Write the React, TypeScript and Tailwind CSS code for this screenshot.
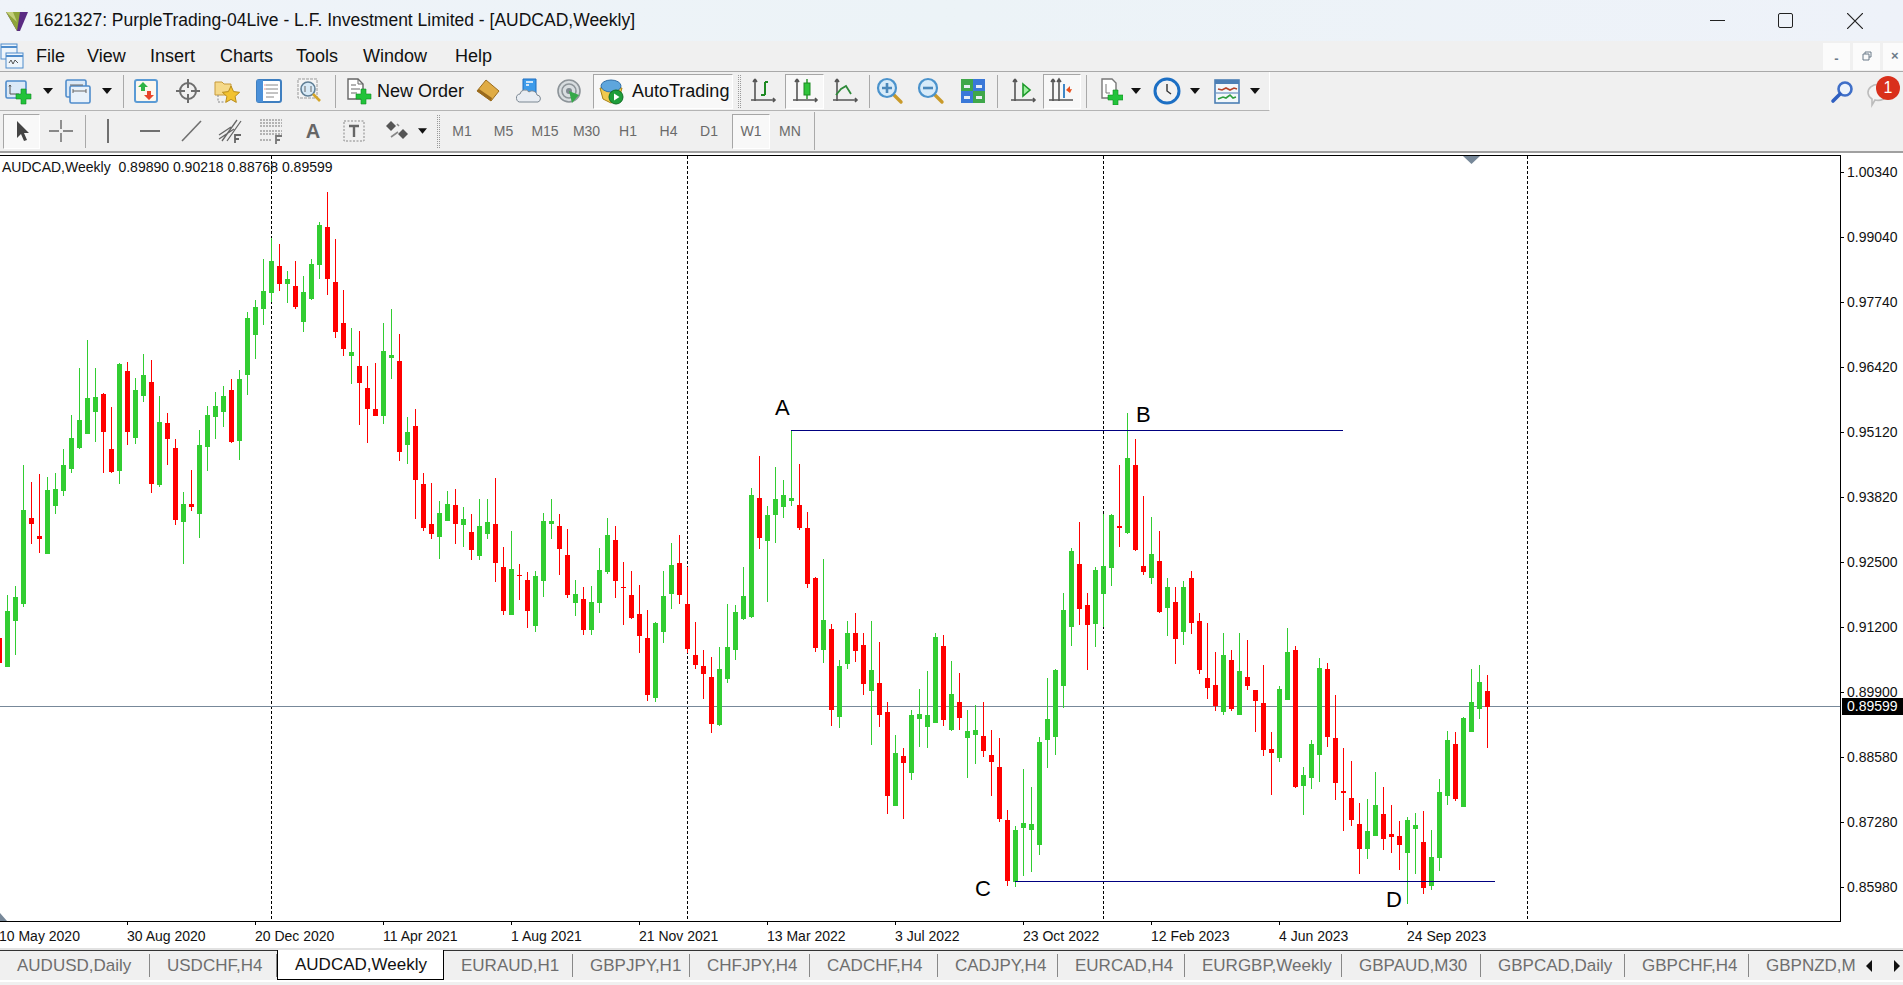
import type { ReactNode } from "react"
import clsx from "clsx"

type Candle = [string, number, number, number, number]

// one row per weekly bar, 8px apart starting at x = -1: colour, high, body top, body bottom, low (chart pixels)
const candles: Candle[] = [
  ["r",620,638,663,680],["g",595,611,667,667],["g",586,597,621,655],["g",465,510,604,607],["r",482,518,524,544],
  ["r",474,536,539,553],["g",477,490,554,554],["g",473,489,506,514],["g",449,465,491,496],["g",415,438,469,473],
  ["g",368,420,448,449],["g",340,398,434,434],["g",368,397,412,442],["r",393,394,432,473],["r",407,449,472,473],
  ["g",363,364,471,484],["r",362,371,432,445],["g",378,390,438,444],["g",354,375,396,402],["r",360,382,484,493],
  ["g",396,422,485,487],["r",413,423,439,465],["r",439,448,520,525],["g",492,504,522,564],["r",470,504,507,511],
  ["g",430,445,514,538],["g",406,415,447,471],["g",392,406,417,439],["g",386,396,412,427],["r",379,390,442,443],
  ["g",370,379,441,460],["g",312,318,375,395],["g",300,307,335,359],["g",259,291,309,325],["g",238,261,293,302],
  ["r",244,266,284,291],["g",271,279,284,303],["r",261,286,307,309],["g",276,292,322,332],["g",259,264,299,300],
  ["g",222,225,265,279],["r",192,227,279,295],["r",239,282,332,338],["r",290,323,349,356],["g",328,352,356,384],
  ["r",331,366,383,425],["r",366,388,409,443],["r",363,409,416,416],["g",323,351,416,424],["g",309,355,358,379],
  ["r",334,361,452,461],["g",417,432,445,464],["r",409,426,480,519],["r",473,484,528,531],["r",483,524,534,539],
  ["g",501,513,537,559],["g",491,504,521,521],["r",489,505,524,544],["g",507,519,525,547],["r",514,532,550,560],
  ["g",499,526,556,560],["g",499,522,534,539],["r",478,524,563,582],["r",547,567,611,615],["g",531,569,615,615],
  ["r",564,575,576,600],["r",572,580,611,628],["g",571,576,626,632],["g",513,521,581,597],["g",499,521,524,539],
  ["r",514,526,549,575],["r",529,555,595,598],["g",580,594,603,616],["r",587,599,630,635],["g",586,602,630,635],
  ["g",548,570,603,613],["g",518,535,572,574],["r",526,540,581,598],["r",562,587,588,625],["r",571,595,618,619],
  ["r",585,614,636,653],["r",610,638,695,701],["g",622,623,698,702],["g",571,596,632,643],["g",543,565,594,609],
  ["r",535,563,595,604],["r",567,604,649,653],["r",622,655,665,669],["r",650,666,674,699],["r",657,677,724,733],
  ["g",647,669,725,726],["g",604,647,679,683],["g",605,612,650,660],["g",567,596,619,620],["g",488,495,617,618],
  ["r",456,498,538,549],["g",506,515,541,602],["g",467,499,515,543],["g",480,495,507,518],["g",430,498,501,506],
  ["r",464,505,528,530],["r",512,528,584,588],["r",577,578,648,652],["g",559,620,650,663],["r",624,629,710,726],
  ["g",660,666,717,728],["g",621,633,664,669],["r",613,633,651,662],["r",633,645,684,695],["g",621,670,691,745],
  ["r",642,683,715,727],["r",702,712,796,814],["g",735,753,806,806],["r",748,756,763,819],["g",710,715,773,780],
  ["g",689,714,719,747],["g",671,715,727,748],["g",633,637,723,723],["r",635,646,720,726],["g",661,694,730,731],
  ["r",673,702,718,730],["g",710,731,738,778],["g",705,730,735,764],["r",702,736,751,757],["r",730,755,762,796],
  ["r",738,767,819,822],["r",810,820,881,886],["g",826,830,882,887],["g",769,823,828,876],["g",787,824,830,872],
  ["g",737,742,845,855],["g",678,719,740,768],["g",669,670,737,755],["g",593,610,686,708],["g",548,551,627,646],
  ["r",522,564,609,625],["r",593,605,625,670],["g",567,570,624,647],["g",514,566,594,627],["g",514,515,568,586],
  ["r",465,526,528,547],["g",413,458,533,534],["r",439,465,550,551],["r",496,566,572,575],["g",517,554,578,584],
  ["r",531,561,612,613],["g",578,587,608,636],["r",587,602,639,664],["g",581,587,632,645],["r",571,578,623,634],
  ["r",613,621,670,674],["r",623,678,688,699],["r",652,685,706,711],["g",633,655,712,715],["r",650,660,709,711],
  ["g",633,671,715,715],["r",640,677,686,690],["r",690,690,701,732],["r",665,703,750,756],["r",732,749,753,795],
  ["g",686,689,758,762],["g",628,652,700,700],["r",646,650,787,788],["g",767,775,786,815],["g",740,744,778,789],
  ["g",658,668,755,782],["r",663,669,737,747],["r",695,738,783,800],["r",748,791,793,831],["r",761,798,820,826],
  ["r",803,824,849,874],["g",799,831,849,859],["g",772,805,836,836],["r",787,814,839,850],["r",805,834,837,853],
  ["r",821,836,845,870],["g",817,820,853,904],["g",813,825,829,874],["r",811,842,888,894],["g",830,857,886,890],
  ["g",779,792,858,871],["g",731,740,796,805],["r",732,744,799,801],["g",717,718,807,807],["g",669,702,732,732],
  ["g",665,682,709,719],["r",675,691,707,748],
]

const prices = ["1.00340","0.99040","0.97740","0.96420","0.95120","0.93820","0.92500","0.91200","0.89900","0.88580","0.87280","0.85980"]
const dates = ["10 May 2020","30 Aug 2020","20 Dec 2020","11 Apr 2021","1 Aug 2021","21 Nov 2021","13 Mar 2022","3 Jul 2022","23 Oct 2022","12 Feb 2023","4 Jun 2023","24 Sep 2023"]
const menus = [
  { label: "File", w: "w-[51px]" },
  { label: "View", w: "w-[63px]" },
  { label: "Insert", w: "w-[70px]" },
  { label: "Charts", w: "w-[76px]" },
  { label: "Tools", w: "w-[67px]" },
  { label: "Window", w: "w-[92px]" },
  { label: "Help", w: "w-[60px]" },
]
const tabs = [
  { label: "AUDUSD,Daily", w: "w-[150px]" },
  { label: "USDCHF,H4", w: "w-[127px]" },
  { label: "AUDCAD,Weekly", w: "w-[167px]", active: true },
  { label: "EURAUD,H1", w: "w-[129px]" },
  { label: "GBPJPY,H1", w: "w-[117px]" },
  { label: "CHFJPY,H4", w: "w-[120px]" },
  { label: "CADCHF,H4", w: "w-[128px]" },
  { label: "CADJPY,H4", w: "w-[120px]" },
  { label: "EURCAD,H4", w: "w-[127px]" },
  { label: "EURGBP,Weekly", w: "w-[157px]" },
  { label: "GBPAUD,M30", w: "w-[139px]" },
  { label: "GBPCAD,Daily", w: "w-[144px]" },
  { label: "GBPCHF,H4", w: "w-[124px]" },
  { label: "GBPNZD,M1", w: "w-[107px]", last: true },
]
const timeframes = [
  { label: "M1", w: "w-[42px]" },
  { label: "M5", w: "w-[41px]" },
  { label: "M15", w: "w-[42px]" },
  { label: "M30", w: "w-[41px]" },
  { label: "H1", w: "w-[42px]" },
  { label: "H4", w: "w-[39px]" },
  { label: "D1", w: "w-[42px]" },
]

function Cell({ className, children }: { className: string; children?: ReactNode }) {
  return <div className={clsx("flex h-full shrink-0 items-center justify-center", className)}>{children}</div>
}

function Pressed({ className, children }: { className: string; children: ReactNode }) {
  return (
    <div className={clsx("flex h-[35px] shrink-0 items-center justify-center border border-t-[#a6a6a6] border-l-[#a6a6a6] border-r-white border-b-white bg-[#f8f8f8]", className)}>
      {children}
    </div>
  )
}

const Sep = ({ className }: { className: string }) => <div className={clsx("h-[33px] w-px shrink-0 bg-[#a9a9a9]", className)} />
const Grip = ({ className }: { className: string }) => (
  <div className={clsx("h-[33px] w-[3px] shrink-0 border-x border-dotted border-[#9a9a9a]", className)} />
)

const Arrow = () => (
  <svg width="10" height="6" viewBox="0 0 10 6"><path d="M0 0h10L5 6z" fill="#111" /></svg>
)

const Plus = ({ x = 0, y = 0 }: { x?: number; y?: number }) => (
  <path transform={`translate(${x} ${y})`} d="M5 0h5v5h5v5h-5v5H5v-5H0V5h5z" fill="#22c33a" stroke="#128a22" strokeWidth=".6" />
)

const NewChartIcon = () => (
  <svg width="28" height="28" viewBox="0 0 28 28">
    <rect x="2" y="4" width="20" height="17" rx="1.5" fill="#dbe9f7" stroke="#4f8ccb" strokeWidth="1.6" />
    <path d="M6 8v9h9M6 8l-1 1.5M6 8l1 1.5" fill="none" stroke="#555" />
    <Plus x={12} y={12} />
  </svg>
)
const ProfileIcon = () => (
  <svg width="28" height="28" viewBox="0 0 28 28">
    <rect x="2" y="3" width="20" height="17" rx="1.5" fill="#dbe9f7" stroke="#4f8ccb" strokeWidth="1.6" />
    <rect x="6" y="9" width="20" height="17" rx="1.5" fill="#e8f1fa" stroke="#4f8ccb" strokeWidth="1.6" />
    <path d="M6 8h13M9 14h13M9 12v4M22 12v4" fill="none" stroke="#666" />
  </svg>
)
const MarketWatchIcon = () => (
  <svg width="28" height="28" viewBox="0 0 28 28">
    <rect x="3" y="3" width="22" height="22" rx="2" fill="#fbf7ee" stroke="#5b9bd5" strokeWidth="2" />
    <path d="M11 5l5 5h-3v4H9v-4H6z" fill="#2fb344" />
    <path d="M17 23l-5-5h3v-4h4v4h3z" fill="#e8452a" />
  </svg>
)
const CrosshairIcon = () => (
  <svg width="28" height="28" viewBox="0 0 28 28" fill="none" stroke="#6d6d6d" strokeWidth="2">
    <circle cx="14" cy="14" r="8" />
    <path d="M14 2v9M14 17v9M2 14h9M17 14h9" />
  </svg>
)
const NavigatorIcon = () => (
  <svg width="28" height="28" viewBox="0 0 28 28">
    <path d="M2 5h7l2 2h7v11H2z" fill="#f5d98a" stroke="#c79a3a" />
    <path d="M5 18v7h6" fill="none" stroke="#888" strokeDasharray="2 1.5" />
    <path d="M18 9l2.6 5.6 6 .7-4.5 4.1 1.2 6-5.3-3-5.3 3 1.2-6-4.5-4.1 6-.7z" fill="#f2c230" stroke="#b98d1c" />
  </svg>
)
const TerminalIcon = () => (
  <svg width="28" height="28" viewBox="0 0 28 28">
    <rect x="2" y="3" width="24" height="22" rx="2" fill="#fff" stroke="#3f7fc0" strokeWidth="2" />
    <rect x="2" y="3" width="6" height="22" fill="#4a90d9" />
    <path d="M11 8h12M11 12h12M11 16h12M11 20h8" stroke="#888" />
    <path d="M9.5 8h1M9.5 12h1" stroke="#d33" />
  </svg>
)
const TesterIcon = () => (
  <svg width="28" height="28" viewBox="0 0 28 28">
    <rect x="2" y="2" width="19" height="19" fill="#f4f4f4" stroke="#999" strokeDasharray="3 1" />
    <circle cx="12" cy="12" r="7" fill="#d8eaf7" stroke="#5f7f96" strokeWidth="1.6" />
    <path d="M9 9v6M15 9v6" stroke="#666" />
    <path d="M17 17l7 7" stroke="#d4a52a" strokeWidth="2.6" />
  </svg>
)
const NewOrderIcon = () => (
  <svg width="28" height="28" viewBox="0 0 28 28">
    <path d="M4 2h10l5 5v15H4z" fill="#fff" stroke="#666" strokeWidth="1.4" />
    <path d="M14 2v5h5M7 8h5M7 12h9M7 16h6" fill="none" stroke="#666" />
    <Plus x={12} y={12} />
  </svg>
)
const GoldIcon = () => (
  <svg width="28" height="28" viewBox="0 0 28 28">
    <path d="M12 3l13 11-8 10L3 14z" fill="#e0ac45" stroke="#9a6c1e" />
    <path d="M3 14l14 10 1-3L5 12z" fill="#9a6a1c" />
  </svg>
)
const CloudDocIcon = () => (
  <svg width="28" height="28" viewBox="0 0 28 28">
    <path d="M8 2h13v15H8z" fill="#3d9bea" stroke="#1f6fc0" />
    <path d="M11 5h7M11 8h3" stroke="#fff" strokeWidth="1.4" />
    <path d="M6 25a4 4 0 0 1-1-8 5 5 0 0 1 9-2 5 5 0 0 1 8 3 3.6 3.6 0 0 1 1 7z" fill="#e9edf2" stroke="#7b8792" />
  </svg>
)
const SignalIcon = () => (
  <svg width="28" height="28" viewBox="0 0 28 28" fill="none">
    <circle cx="14" cy="14" r="11" fill="#d8dde0" stroke="#8d9499" strokeWidth="1.6" />
    <circle cx="14" cy="14" r="7" stroke="#8d9499" strokeWidth="1.6" />
    <circle cx="14" cy="14" r="3" fill="#7f8a90" />
    <path d="M14 14l3 12 7-8z" fill="#37a94a" />
  </svg>
)
const AutoIcon = () => (
  <svg width="28" height="28" viewBox="0 0 28 28">
    <path d="M3 11h22l-3 11-8 4-8-4z" fill="#f1c94e" stroke="#a98215" />
    <ellipse cx="14" cy="9" rx="10" ry="6" fill="#5ea6dd" stroke="#2f6fa8" />
    <circle cx="19" cy="20" r="7" fill="#1e9e3a" stroke="#0f6d24" />
    <path d="M17 16.5l5.5 3.5-5.5 3.5z" fill="#fff" />
  </svg>
)
const BarsIcon = () => (
  <svg width="28" height="28" viewBox="0 0 28 28" fill="none">
    <path d="M6 2v22M2 23h24M6 2L4 5M6 2l2 3M24 21l2 2-2 2M3 23v0" stroke="#555" strokeWidth="1.6" />
    <path d="M16 5h3M16 5v13M12 18h4" stroke="#1d8a22" strokeWidth="2" />
  </svg>
)
const CandleIcon = () => (
  <svg width="28" height="28" viewBox="0 0 28 28" fill="none">
    <path d="M6 2v22M2 23h24M6 2L4 5M6 2l2 3M24 21l2 2-2 2" stroke="#555" strokeWidth="1.6" />
    <path d="M16 2v20" stroke="#1d8a22" strokeWidth="1.4" />
    <rect x="13" y="6" width="6" height="12" fill="#2fc43a" stroke="#1d8a22" />
  </svg>
)
const LineIcon = () => (
  <svg width="28" height="28" viewBox="0 0 28 28" fill="none">
    <path d="M6 2v22M2 23h24M6 2L4 5M6 2l2 3M24 21l2 2-2 2" stroke="#555" strokeWidth="1.6" />
    <path d="M5 18l5-6 5-3 5 8" stroke="#2f8a3a" strokeWidth="1.8" />
  </svg>
)
const ZoomIcon = ({ plus }: { plus?: boolean }) => (
  <svg width="28" height="28" viewBox="0 0 28 28" fill="none">
    <path d="M17 17l8 8" stroke="#c99a2a" strokeWidth="3.4" strokeLinecap="round" />
    <circle cx="11" cy="11" r="9" fill="#d7ebf9" stroke="#4b93cc" strokeWidth="2.2" />
    <path d={plus ? "M6 11h10M11 6v10" : "M6 11h10"} stroke="#4b88ba" strokeWidth="2.6" />
  </svg>
)
const TileIcon = () => (
  <svg width="28" height="28" viewBox="0 0 28 28">
    <rect x="2" y="2" width="12" height="12" fill="#3fa74a" />
    <rect x="14" y="2" width="12" height="12" fill="#3a78d8" />
    <rect x="2" y="14" width="12" height="12" fill="#3a78d8" />
    <rect x="14" y="14" width="12" height="12" fill="#3fa74a" />
    <path d="M5 8h6v3H5zM17 8h6v3h-6zM5 19h6v3H5zM17 19h6v3h-6z" fill="#e6eef5" />
  </svg>
)
const AutoScrollIcon = () => (
  <svg width="28" height="28" viewBox="0 0 28 28" fill="none">
    <path d="M6 2v22M2 23h24M6 2L4 5M6 2l2 3M24 21l2 2-2 2" stroke="#555" strokeWidth="1.6" />
    <path d="M14 7l7 6-7 6z" fill="#9ef0a0" stroke="#1d9a2a" strokeWidth="1.6" />
  </svg>
)
const ShiftIcon = () => (
  <svg width="28" height="28" viewBox="0 0 28 28" fill="none">
    <path d="M5 2v22M1 23h24M5 2L3 5M5 2l2 3M11 2v22M9 5l2-3 2 3" stroke="#555" strokeWidth="1.6" />
    <path d="M16 7v14" stroke="#2a7ac0" strokeWidth="1.8" />
    <path d="M18 13l6-1-2 4zM18 13l4-4v4" fill="#e8521f" />
  </svg>
)
const IndicatorIcon = () => (
  <svg width="28" height="28" viewBox="0 0 28 28">
    <path d="M7 2h10l4 4v15H7z" fill="#fff" stroke="#777" strokeWidth="1.4" />
    <path d="M11 7v9h4" fill="none" stroke="#777" />
    <Plus x={13} y={13} />
  </svg>
)
const ClockIcon = () => (
  <svg width="28" height="28" viewBox="0 0 28 28">
    <circle cx="14" cy="14" r="12" fill="#f2f2f2" stroke="#1c6fc4" strokeWidth="3" />
    <path d="M14 7v7l4 3" fill="none" stroke="#333" strokeWidth="1.4" />
  </svg>
)
const TemplateIcon = () => (
  <svg width="28" height="28" viewBox="0 0 28 28" fill="none">
    <rect x="2" y="3" width="24" height="23" fill="#f2f7fb" stroke="#4c7fb5" strokeWidth="1.6" />
    <rect x="2" y="3" width="24" height="4" fill="#4c7fb5" />
    <path d="M5 12l4 1 4-2 4 2 4-2 3 1" stroke="#b5432a" strokeWidth="1.6" />
    <path d="M3 16h22" stroke="#4c7fb5" />
    <path d="M5 22l5-2 3 1 4-3 3 3 3-1" stroke="#2e9e3e" strokeWidth="1.6" />
  </svg>
)

const CursorIcon = () => (
  <svg width="20" height="24" viewBox="0 0 20 24"><path d="M5 2v17l4-4 3 7 3-1-3-7h5z" fill="#444" /></svg>
)
const CrossIcon = () => (
  <svg width="24" height="24" viewBox="0 0 24 24" stroke="#666" strokeWidth="1.4"><path d="M12 1v9M12 14v9M0 12h10M14 12h10" /></svg>
)
const ChannelIcon = () => (
  <svg width="28" height="28" viewBox="0 0 28 28" fill="none" stroke="#666" strokeWidth="1.3">
    <path d="M2 18L14 10M2 22L17 12M5 24L20 3M10 24L24 4" />
    <path d="M18 26v-8h6M18 22h4" strokeWidth="1.8" />
  </svg>
)
const FibIcon = () => (
  <svg width="28" height="28" viewBox="0 0 28 28" fill="none" stroke="#777" strokeDasharray="2 1">
    <path d="M2 3h22M2 6h22M2 9h22M2 14h22M2 17h22M2 23h12" strokeWidth="1.2" />
    <path d="M18 27v-8h6M18 23h4" strokeWidth="1.8" strokeDasharray="none" />
  </svg>
)
const TextIcon = () => (
  <svg width="24" height="24" viewBox="0 0 24 24" fill="none">
    <rect x="2" y="2" width="20" height="20" stroke="#888" strokeDasharray="2 1.5" />
    <path d="M7 7h10M12 7v11" stroke="#666" strokeWidth="2.4" />
  </svg>
)
const ShapesIcon = () => (
  <svg width="24" height="24" viewBox="0 0 24 24">
    <path d="M6 2l5 5-5 5-5-5z" fill="#555" />
    <path d="M18 10l5 5-5 5-5-5z" fill="#555" />
    <path d="M12 5l2 2M13 13l-7 5" stroke="#888" strokeWidth="1.6" />
  </svg>
)

function ChartPlot() {
  return (
    <svg viewBox="0 156 1840 765" width="1840" height="765" className="block" shapeRendering="crispEdges">
      {[271, 687, 1103, 1527].map((x) => (
        <line key={x} x1={x + 0.5} x2={x + 0.5} y1="156" y2="921" stroke="#000" strokeDasharray="3 2" />
      ))}
      <rect x="0" y="706" width="1840" height="1" fill="#778899" />
      {candles.map(([c, high, top, bottom, low], i) => {
        const x = -1 + i * 8
        const fill = c === "g" ? "#32cd32" : "#ff0000"
        return (
          <g key={x} fill={fill}>
            <rect x={x} y={high} width="1" height={low - high} />
            <rect x={x - 2} y={top} width="5" height={bottom - top} />
          </g>
        )
      })}
      <rect x="791" y="430" width="552" height="1" fill="#000080" />
      <rect x="1015" y="881" width="480" height="1" fill="#000080" />
      <polygon points="1463,156 1480,156 1471.5,164" fill="#778899" shapeRendering="auto" />
      <polygon points="-6,921 7,921 0,913" fill="#778899" shapeRendering="auto" />
      <g fontSize="22" fontFamily="'Liberation Sans', sans-serif" fill="#000" shapeRendering="auto">
        <text x="775" y="415">A</text>
        <text x="1136" y="422">B</text>
        <text x="975" y="896">C</text>
        <text x="1386" y="907">D</text>
      </g>
    </svg>
  )
}

export default function App() {
  return (
    <div className="flex h-[985px] w-[1903px] flex-col overflow-hidden bg-[#f0f0f0] font-['Liberation_Sans',Arial,sans-serif] text-black">
      {/* title bar */}
      <div className="flex h-[41px] shrink-0 items-center bg-gradient-to-r from-[#eff3f9] via-[#ecf3f7] to-[#eef2f9]">
        <div className="flex w-[34px] shrink-0 justify-center">
          <svg width="26" height="26" viewBox="0 0 26 26">
            <path d="M2 4h22L16 23h-3z" fill="#5a2a82" />
            <path d="M2 4h14l-3 19z" fill="#8fa53a" />
            <path d="M2 4h7l4 10z" fill="#c4cf7a" />
          </svg>
        </div>
        <span className="text-[17.5px] whitespace-nowrap text-[#111]">1621327: PurpleTrading-04Live - L.F. Investment Limited - [AUDCAD,Weekly]</span>
        <div className="ml-auto flex h-full items-center">
          <Cell className="w-[68px]"><div className="h-px w-[15px] bg-[#222]" /></Cell>
          <Cell className="w-[68px]"><div className="size-[15px] rounded-[2px] border-[1.5px] border-[#222]" /></Cell>
          <Cell className="w-[72px]">
            <svg width="16" height="16" viewBox="0 0 16 16" stroke="#222" strokeWidth="1.2"><path d="M0 0l16 16M16 0L0 16" /></svg>
          </Cell>
          <div className="w-[12px]" />
        </div>
      </div>

      {/* menu */}
      <div className="flex h-[30px] shrink-0 items-center">
        <div className="flex w-[36px] shrink-0 items-start">
          <svg width="24" height="26" viewBox="0 0 24 26" fill="#eef5fb" stroke="#4f8ccb">
            <rect x="1" y="1" width="16" height="15" />
            <rect x="6" y="10" width="17" height="15" />
            <path d="M1 4h16M6 13h17" strokeWidth="2" />
            <path d="M9 20l2-3 2 4 2-4 3 3" fill="none" stroke="#555" />
          </svg>
        </div>
        {menus.map((m) => (
          <div key={m.label} className={clsx("shrink-0 text-[18px] text-[#111]", m.w)}>{m.label}</div>
        ))}
        <div className="ml-auto flex h-full items-center gap-[3px] pl-px">
          <div className="flex h-[27px] w-[27px] items-center justify-center bg-[#fbfbfb] pt-[5px] text-[13px] leading-none font-bold text-[#6b7a89]">-</div>
          <div className="flex h-[27px] w-[27px] items-center justify-center bg-[#fbfbfb]">
            <svg width="10" height="10" viewBox="0 0 10 10" fill="none" stroke="#6b7a89"><path d="M3 3V1h6v5H7M1 3h6v6H1z" /></svg>
          </div>
          <div className="flex h-[27px] w-[20px] items-center bg-[#fbfbfb] pl-[8px] text-[13px] font-bold text-[#6b7a89]">×</div>
        </div>
      </div>

      {/* toolbar row 1 */}
      <div className="flex h-[40px] shrink-0 items-center border-t border-[#a9a9a9]">
        <div className="flex h-full w-[1270px] shrink-0 items-center border-r border-b border-r-white border-b-[#b4b4b4]">
          <Cell className="w-[36px]"><NewChartIcon /></Cell>
          <Cell className="w-[24px]"><Arrow /></Cell>
          <Cell className="w-[36px]"><ProfileIcon /></Cell>
          <Cell className="w-[22px]"><Arrow /></Cell>
          <Sep className="ml-[5px]" />
          <Cell className="w-[44px]"><MarketWatchIcon /></Cell>
          <Cell className="w-[40px]"><CrosshairIcon /></Cell>
          <Cell className="w-[38px]"><NavigatorIcon /></Cell>
          <Cell className="w-[46px]"><TerminalIcon /></Cell>
          <Cell className="w-[36px]"><TesterIcon /></Cell>
          <Sep className="ml-[7px]" />
          <Cell className="w-[136px] justify-start gap-[5px] pl-[8px]">
            <NewOrderIcon />
            <span className="text-[18px] whitespace-nowrap text-[#111]">New Order</span>
          </Cell>
          <Cell className="w-[32px]"><GoldIcon /></Cell>
          <Cell className="w-[50px]"><CloudDocIcon /></Cell>
          <Cell className="w-[30px]"><SignalIcon /></Cell>
          <Pressed className="ml-[9px] w-[140px] justify-start gap-[7px] pl-[3px]">
            <AutoIcon />
            <span className="text-[18px] whitespace-nowrap text-[#111]">AutoTrading</span>
          </Pressed>
          <Grip className="ml-[5px]" />
          <Cell className="ml-[4px] w-[36px]"><BarsIcon /></Cell>
          <Pressed className="ml-[4px] w-[39px]"><CandleIcon /></Pressed>
          <Cell className="w-[42px]"><LineIcon /></Cell>
          <Sep className="ml-[3px]" />
          <Cell className="w-[40px]"><ZoomIcon plus /></Cell>
          <Cell className="w-[42px]"><ZoomIcon /></Cell>
          <Cell className="w-[42px]"><TileIcon /></Cell>
          <Sep className="ml-[3px]" />
          <Cell className="ml-[4px] w-[41px]"><AutoScrollIcon /></Cell>
          <Pressed className="w-[38px]"><ShiftIcon /></Pressed>
          <Sep className="ml-[5px]" />
          <Cell className="w-[44px]"><IndicatorIcon /></Cell>
          <Cell className="w-[10px]"><Arrow /></Cell>
          <Cell className="ml-[7px] w-[38px]"><ClockIcon /></Cell>
          <Cell className="w-[18px]"><Arrow /></Cell>
          <Cell className="w-[46px]"><TemplateIcon /></Cell>
          <Cell className="w-[10px]"><Arrow /></Cell>
        </div>
        <div className="ml-auto flex h-full items-center">
          <Cell className="w-[24px]">
            <svg width="24" height="24" viewBox="0 0 24 24" fill="none">
              <circle cx="15" cy="9" r="6.5" fill="#eef4fb" stroke="#3f6fc8" strokeWidth="2.6" />
              <path d="M10 14l-7 7" stroke="#2f5fc0" strokeWidth="3.6" strokeLinecap="round" />
            </svg>
          </Cell>
          <div className="relative ml-[12px] h-full w-[37px]">
            <svg width="28" height="28" viewBox="0 0 28 28" className="absolute top-[9px] left-0">
              <path d="M2 12a10 8 0 1 1 7 7l-3 5 0-6a9 8 0 0 1-4-6z" fill="#f4f4f4" stroke="#bcbcbc" strokeWidth="1.6" />
            </svg>
            <div className="absolute top-[4px] left-[10px] flex size-[24px] items-center justify-center rounded-full bg-[#d9301c] text-[16px] font-medium text-white">1</div>
          </div>
        </div>
      </div>

      {/* toolbar row 2 */}
      <div className="flex h-[40px] shrink-0 items-center">
        <Pressed className="ml-[3px] w-[37px]"><CursorIcon /></Pressed>
        <Cell className="w-[42px]"><CrossIcon /></Cell>
        <Sep className="ml-[3px]" />
        <Cell className="w-[44px]"><div className="h-[24px] w-[2px] bg-[#707070]" /></Cell>
        <Cell className="w-[40px]"><div className="h-[2px] w-[20px] bg-[#707070]" /></Cell>
        <Cell className="w-[42px]">
          <svg width="24" height="24" viewBox="0 0 24 24"><path d="M3 22L22 2" stroke="#707070" strokeWidth="1.6" /></svg>
        </Cell>
        <Cell className="w-[38px]"><ChannelIcon /></Cell>
        <Cell className="w-[44px]"><FibIcon /></Cell>
        <Cell className="w-[38px] text-[20px] font-bold text-[#666]">A</Cell>
        <Cell className="w-[44px]"><TextIcon /></Cell>
        <Cell className="w-[42px]"><ShapesIcon /></Cell>
        <Cell className="w-[9px]"><Arrow /></Cell>
        <Grip className="ml-[10px]" />
        <div className="w-[1px]" />
        {timeframes.map((t) => (
          <Cell key={t.label} className={clsx("text-[14px] text-[#6a6a6a]", t.w)}>{t.label}</Cell>
        ))}
        <Pressed className="ml-[2px] w-[38px] text-[14px] text-[#6a6a6a]">W1</Pressed>
        <Cell className="w-[40px] text-[14px] text-[#6a6a6a]">MN</Cell>
        <Sep className="ml-[4px] h-[38px]" />
      </div>

      {/* chart + axes */}
      <div className="flex h-[797px] shrink-0 flex-col border-t-2 border-[#a0a0a0] bg-white pt-[2px]">
        <div className="flex min-h-0 flex-1">
          <div className="flex w-[1841px] shrink-0 flex-col">
            <div className="relative h-[767px] shrink-0 border-y border-r border-black">
              <ChartPlot />
              <div className="absolute top-[2px] left-[2px] text-[14px] leading-[18px] whitespace-pre text-[#111]">AUDCAD,Weekly  0.89890 0.90218 0.88768 0.89599</div>
            </div>
            <div className="-ml-px flex h-[26px] shrink-0">
              {dates.map((d) => (
                <div key={d} className="flex w-[128px] shrink-0 flex-col">
                  <div className="h-[3px] w-px bg-black" />
                  <div className="mt-[2px] text-[14px] leading-[18px] whitespace-nowrap text-[#111]">{d}</div>
                </div>
              ))}
            </div>
          </div>
          <div className="relative flex min-w-0 flex-1 flex-col gap-[45px] pt-[7px]">
            {prices.map((p) => (
              <div key={p} className="flex h-[20px] shrink-0 items-center gap-[3px]">
                <div className="h-px w-[3px] shrink-0 bg-black" />
                <span className="text-[14px] text-[#111]">{p}</span>
              </div>
            ))}
            <div className="absolute top-[543px] left-[1px] flex h-[17px] w-[61px] items-center bg-black pl-[5px] text-[14px] text-white">0.89599</div>
          </div>
        </div>
      </div>

      {/* chart tabs */}
      <div className="flex min-h-0 flex-1 flex-col">
        <div className="h-[2px] shrink-0 bg-[#e2e2e2]" />
        <div className="flex h-[30px] shrink-0 items-stretch border-t border-[#333]">
          {tabs.map((t) => (
            <div
              key={t.label}
              className={clsx(
                "flex shrink-0 items-center overflow-hidden text-[17px] whitespace-nowrap",
                t.w,
                t.active ? "-mt-px border-x border-b border-black bg-white pl-[17px] text-[#111]" : "pl-[17px] text-[#6e6e6e]",
                !t.active && !t.last && "relative after:absolute after:top-[3px] after:right-0 after:bottom-[3px] after:w-px after:bg-[#888]",
              )}
            >
              {t.label}
            </div>
          ))}
          <div className="ml-auto flex w-[47px] items-center justify-between pr-[3px] pl-[10px]">
            <svg width="6" height="12" viewBox="0 0 6 12"><path d="M6 0v12L0 6z" fill="#111" /></svg>
            <svg width="6" height="12" viewBox="0 0 6 12"><path d="M0 0v12l6-6z" fill="#111" /></svg>
          </div>
        </div>
        <div className="h-[2px] shrink-0 bg-white" />
      </div>
    </div>
  )
}
